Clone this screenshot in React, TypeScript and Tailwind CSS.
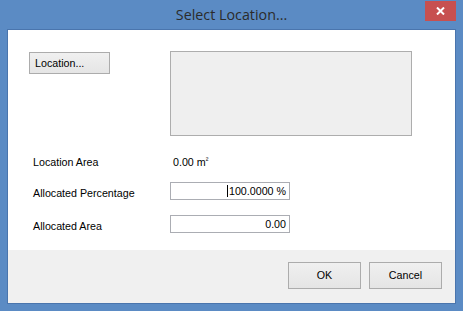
import React from 'react';

const ui = { fontFamily: '"Liberation Sans", Arial, sans-serif' };
const title = { fontFamily: '"Open Sans", "Noto Sans", sans-serif' };

const WinButton = ({ label, className }: { label: string; className: string }) => (
  <button
    type="button"
    style={ui}
    className={`border border-[#acacac] bg-gradient-to-b from-[#f0f0f0] to-[#e5e5e5] text-[10.7px] text-black leading-none ${className}`}
  >
    {label}
  </button>
);

const Field = ({ value, cursor }: { value: string; cursor?: boolean }) => (
  <div className="w-[120px] h-[18px] border border-[#abadb3] bg-white flex items-center justify-end pr-[3px] text-[10.7px] text-black leading-none">
    {cursor && <span className="w-px h-[12px] bg-black mr-[1px]" />}
    <span>{value}</span>
  </div>
);

export default function App() {
  return (
    <div className="w-[463px] h-[311px] bg-[#5b8bc4] flex flex-col">
      <div className="relative h-[29px] flex items-center justify-center">
        <span style={title} className="text-[14.3px] text-[#2b2b2b] pt-[1px]">
          Select Location...
        </span>
        <div className="absolute left-[425px] top-[1px] w-[31px] h-[20px] bg-[#c75050] flex items-center justify-center">
          <svg width="9" height="8" viewBox="0 0 9 8">
            <path d="M1 0.5 L8 7.5 M8 0.5 L1 7.5" stroke="white" strokeWidth="2" />
          </svg>
        </div>
      </div>

      <div className="mx-[7px] h-[275px] border border-[#4a75ad] bg-white flex flex-col" style={ui}>
        <div className="h-[220px] px-[21px] pt-[21px] flex flex-col">
          <div className="flex">
            <WinButton label="Location..." className="w-[81px] h-[22px] mt-[1px] text-left pl-[5px]" />
            <div className="ml-[60px] w-[242px] h-[85px] border border-[#adadad] bg-[#efefef]" />
          </div>

          <div className="grid grid-cols-[141px_auto] text-[10.7px] text-black leading-none">
            <div className="pl-[4px] h-[18px] mt-[16px] pt-[5px]">Location Area</div>
            <div className="pl-[3px] h-[18px] mt-[16px] pt-[5px]">
              0.00 m<span className="text-[8px] align-top">²</span>
            </div>

            <div className="pl-[4px] h-[18px] mt-[12px] pt-[6px]">Allocated Percentage</div>
            <div className="mt-[12px]">
              <Field value="100.0000 %" cursor />
            </div>

            <div className="pl-[4px] h-[18px] mt-[15px] pt-[6px]">Allocated Area</div>
            <div className="mt-[15px]">
              <Field value="0.00" />
            </div>
          </div>
        </div>

        <div className="flex-1 bg-[#f0f0f0] flex justify-end items-start pt-[12px] pr-[13px] gap-[8px]">
          <WinButton label="OK" className="w-[73px] h-[27px]" />
          <WinButton label="Cancel" className="w-[73px] h-[27px]" />
        </div>
      </div>
    </div>
  );
}
